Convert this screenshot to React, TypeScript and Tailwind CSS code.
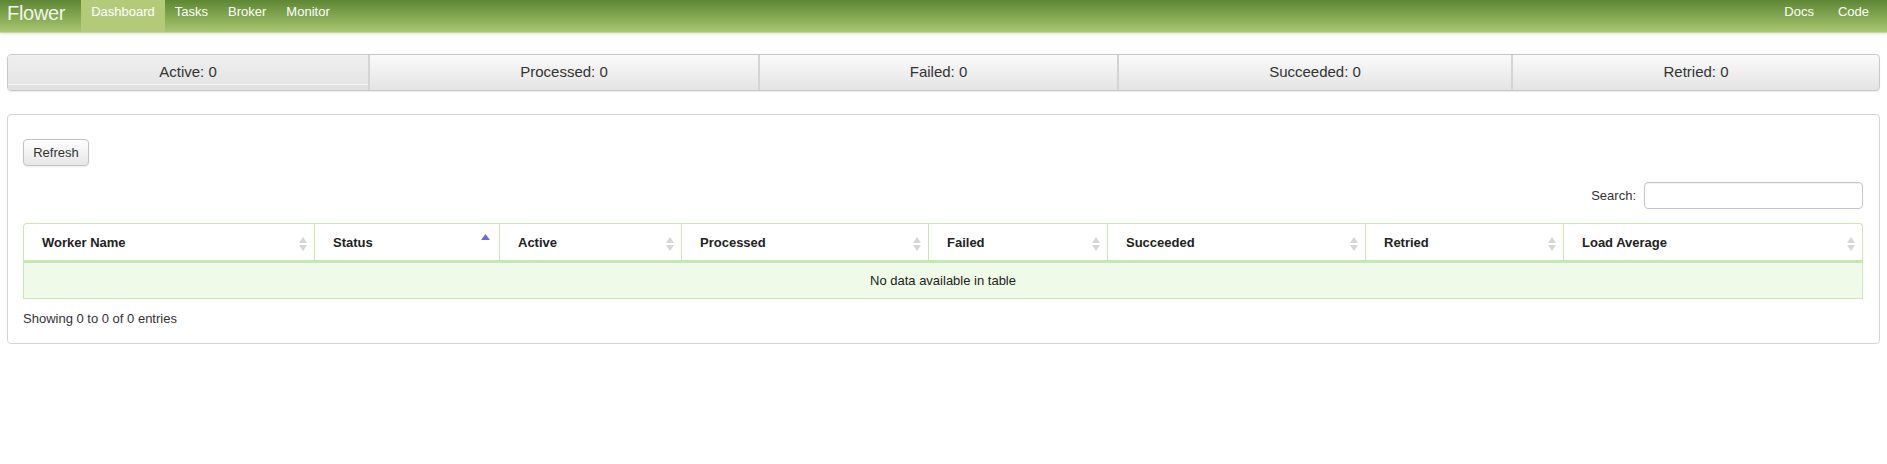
import React from 'react'

const stats = [
  { label: 'Active: 0', w: 'w-[360px]', active: true },
  { label: 'Processed: 0', w: 'w-[390px]' },
  { label: 'Failed: 0', w: 'w-[359px]' },
  { label: 'Succeeded: 0', w: 'w-[394px]' },
  { label: 'Retried: 0', w: 'flex-1' },
]

const columns = [
  { name: 'Worker Name', w: 'w-[291px]' },
  { name: 'Status', w: 'w-[185px]', sorted: true },
  { name: 'Active', w: 'w-[182px]' },
  { name: 'Processed', w: 'w-[247px]' },
  { name: 'Failed', w: 'w-[179px]' },
  { name: 'Succeeded', w: 'w-[258px]' },
  { name: 'Retried', w: 'w-[198px]' },
  { name: 'Load Average', w: 'flex-1' },
]

export default function App() {
  return (
    <div className="min-h-[464px] bg-white text-[13px] text-[#333] font-['Liberation_Sans',Arial,sans-serif]">
      <Navbar />
      <div className="px-[7px] pt-[21px]">
        <div className="flex h-[37px] rounded-[4px] border border-[#c8c8c8] bg-gradient-to-b from-[#fafafa] to-[#e4e4e4] shadow-[0_1px_1px_rgba(0,0,0,0.08)] overflow-hidden">
          {stats.map((s, i) => (
            <div
              key={s.label}
              className={`${s.w} flex items-center justify-center text-[15px] text-[#333] ${i > 0 ? 'border-l-2 border-[#d4d4d4]' : ''} ${s.active ? 'bg-gradient-to-b from-[#efefef] to-[#e2e2e2] shadow-[inset_0_-5px_0_#e0e0e0,inset_0_-6px_0_#f4f4f4]' : ''}`}
            >
              {s.label}
            </div>
          ))}
        </div>

        <div className="mt-[23px] h-[230px] rounded-[4px] border border-[#d4d4d4] px-[15px] pt-[24px]">
          <button className="h-[27px] w-[66px] rounded-[4px] border border-[#c4c4c4] bg-gradient-to-b from-white to-[#e6e6e6] text-[13px] text-[#333] shadow-[0_1px_2px_rgba(0,0,0,0.08)]">
            Refresh
          </button>

          <div className="mt-[16px] flex items-center justify-end pr-[1px]">
            <span className="mr-[8px] text-[13px] text-[#333]">Search:</span>
            <input className="h-[27px] w-[219px] rounded-[4px] border border-[#c6c6c6] bg-white shadow-[inset_0_1px_1px_rgba(0,0,0,0.06)]" />
          </div>

          <div className="mt-[14px] mr-[1px]">
            <div className="flex h-[40px] rounded-t-[4px] border border-b-[3px] border-[#c9e6b4] border-b-[#c8e6b0] bg-white">
              {columns.map((c, i) => (
                <div
                  key={c.name}
                  className={`${c.w} relative flex items-center pl-[18px] pt-[1px] font-bold text-[13px] text-[#222] ${i < columns.length - 1 ? 'border-r border-[#c9e6b4]' : ''}`}
                >
                  {c.name}
                  <SortIcon sorted={c.sorted} />
                </div>
              ))}
            </div>
            <div className="flex h-[36px] items-center justify-center border border-t-0 border-[#c9e6b4] bg-[#effbe8] pt-[1px] text-[13px] text-[#222]">
              No data available in table
            </div>
          </div>

          <div className="mt-[10px] text-[13px] text-[#333]">Showing 0 to 0 of 0 entries</div>
        </div>
      </div>
    </div>
  )
}

function Navbar() {
  return (
    <div className="flex h-[33px] items-stretch bg-gradient-to-b from-[#5e8733] to-[#a9c770] border-b border-[#c5d8a2] shadow-[0_1px_2px_rgba(0,0,0,0.12)] text-white">
      <div className="pl-[7px] pr-[16px] pt-[1px] text-[20px] font-light leading-[24px] text-[#f2f5ea] tracking-[-0.3px]">Flower</div>
      <a className="bg-[#b3cb79] px-[10px] pt-[4px] text-[13px] leading-[16px] text-white">Dashboard</a>
      <a className="px-[10px] pt-[4px] text-[13px] leading-[16px] text-white">Tasks</a>
      <a className="px-[10px] pt-[4px] text-[13px] leading-[16px] text-white">Broker</a>
      <a className="px-[10px] pt-[4px] text-[13px] leading-[16px] text-white">Monitor</a>
      <div className="flex-1" />
      <a className="px-[12px] pt-[4px] text-[13px] leading-[16px] text-white">Docs</a>
      <a className="pl-[12px] pr-[18px] pt-[4px] text-[13px] leading-[16px] text-white">Code</a>
    </div>
  )
}

function SortIcon({ sorted }: { sorted?: boolean }) {
  if (sorted) {
    return (
      <svg className="absolute right-[9px] top-[10px]" width="9" height="6" viewBox="0 0 9 6">
        <path d="M4.5 0 L9 6 L0 6 Z" fill="#6c6ce0" />
      </svg>
    )
  }
  return (
    <svg className="absolute right-[7px] top-[13px]" width="8" height="14" viewBox="0 0 8 14">
      <path d="M4 0 L8 6 L0 6 Z" fill="#d6d6d6" />
      <path d="M0 8 L8 8 L4 14 Z" fill="#d6d6d6" />
    </svg>
  )
}
